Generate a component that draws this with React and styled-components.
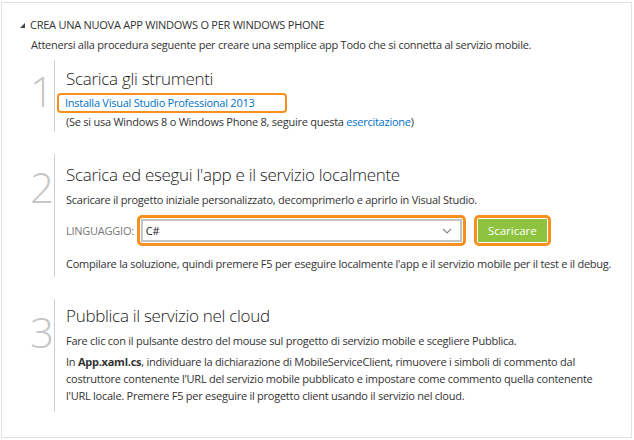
import React from 'react';
import styled, { createGlobalStyle } from 'styled-components';

const GlobalStyle = createGlobalStyle`
  body {
    margin: 0;
    background: #fff;
    font-family: "Open Sans", "Noto Sans", sans-serif;
    color: #333;
  }
`;

const Panel = styled.div`
  box-sizing: border-box;
  margin: 2px 0 0 1px;
  width: 631px;
  height: 436px;
  border: 1px solid #e3e3e3;
  padding: 12px 0 0 18px;
  font-size: 11px;
  letter-spacing: -0.25px;
`;

const Header = styled.div`
  display: flex;
  align-items: center;
  gap: 5px;
  height: 18px;
  text-transform: uppercase;
  color: #333;
`;

const Caret = styled.span`
  width: 0;
  height: 0;
  border-left: 5px solid transparent;
  border-bottom: 5px solid #444;
  margin-top: 2px;
`;

const Intro = styled.p`
  margin: 3px 0 0 11px;
  line-height: 18px;
`;

const Steps = styled.div`
  display: flex;
  flex-direction: column;
  gap: 22px;
  margin: 6px 0 0 11px;
`;

const Step = styled.section`
  display: grid;
  grid-template-columns: 24px 1fr;
  height: ${p => p.h}px;
`;

const Num = styled.div`
  border-right: 1px solid #cfcfcf;
  font-size: 42px;
  font-weight: 300;
  color: #c6c6c6;
  line-height: 1;
  padding-top: ${p => p.top}px;
  margin-left: -1px;
`;

const Body = styled.div`
  padding: ${p => p.top || 7}px 0 0 11px;
`;

const Title = styled.h2`
  margin: 0 0 ${p => p.mb || 2}px;
  font-size: 17px;
  font-weight: 300;
  letter-spacing: -0.3px;
  line-height: 24px;
  color: #222;
`;

const Text = styled.p`
  margin: ${p => p.mt || 0}px 0 0;
  line-height: 17px;
  max-width: ${p => p.maxW ? `${p.maxW}px` : 'none'};
`;

const Link = styled.a`
  color: #0072c6;
  text-decoration: none;
`;

const Highlight = styled.div`
  display: inline-block;
  box-sizing: border-box;
  border: 2.5px solid #f7901e;
  border-radius: 4px;
  margin-left: -9px;
  padding: 0 30px 0 6px;
  height: 20px;
  line-height: 15px;
`;

const Row = styled.div`
  display: flex;
  align-items: center;
  margin-top: 7px;
`;

const Label = styled.span`
  color: #777;
  text-transform: uppercase;
  margin-right: 3px;
`;

const OrangeRing = styled.div`
  box-sizing: border-box;
  border: 3px solid #f7901e;
  border-radius: 5px;
  padding: 1px;
  width: ${p => p.w}px;
  height: 31px;
  margin-right: ${p => p.mr || 0}px;
`;

const Select = styled.div`
  box-sizing: border-box;
  height: 100%;
  border: 2px solid #c4c4c4;
  display: flex;
  align-items: center;
  justify-content: space-between;
  padding: 0 8px 0 3px;
  color: #222;
`;

const GreenButton = styled.button`
  box-sizing: border-box;
  width: 100%;
  height: 100%;
  border: none;
  background: #8dc33f;
  color: #fff;
  font: inherit;
  font-size: 11.5px;
  padding: 0;
`;

const Bold = styled.b`
  font-weight: 700;
`;

export default function App() {
  return (
    <>
      <GlobalStyle />
      <Panel>
        <Header>
          <Caret />
          <span>Crea una nuova app Windows o per Windows Phone</span>
        </Header>
        <Intro>Attenersi alla procedura seguente per creare una semplice app Todo che si connetta al servizio mobile.</Intro>
        <Steps>
          <Step h={72}>
            <Num top={10}>1</Num>
            <Body>
              <Title>Scarica gli strumenti</Title>
              <Highlight>
                <Link href="#">Installa Visual Studio Professional 2013</Link>
              </Highlight>
              <Text>
                (Se si usa Windows 8 o Windows Phone 8, seguire questa <Link href="#">esercitazione</Link>)
              </Text>
            </Body>
          </Step>
          <Step h={123}>
            <Num top={12}>2</Num>
            <Body top={9}>
              <Title mb={4}>Scarica ed esegui l'app e il servizio localmente</Title>
              <Text>Scaricare il progetto iniziale personalizzato, decomprimerlo e aprirlo in Visual Studio.</Text>
              <Row>
                <Label>Linguaggio:</Label>
                <OrangeRing w={329} mr={8}>
                  <Select>
                    <span>C#</span>
                    <svg width="10" height="6" viewBox="0 0 10 6">
                      <path d="M1 1l4 4 4-4" fill="none" stroke="#888" strokeWidth="1.1" />
                    </svg>
                  </Select>
                </OrangeRing>
                <OrangeRing w={77}>
                  <GreenButton>Scaricare</GreenButton>
                </OrangeRing>
              </Row>
              <Text mt={9}>Compilare la soluzione, quindi premere F5 per eseguire localmente l'app e il servizio mobile per il test e il debug.</Text>
            </Body>
          </Step>
          <Step h={113}>
            <Num top={12}>3</Num>
            <Body top={5}>
              <Title mb={4}>Pubblica il servizio nel cloud</Title>
              <Text>Fare clic con il pulsante destro del mouse sul progetto di servizio mobile e scegliere Pubblica.</Text>
              <Text mt={4} maxW={530}>
                In <Bold>App.xaml.cs</Bold>, individuare la dichiarazione di MobileServiceClient, rimuovere i simboli di commento dal costruttore contenente l'URL del servizio mobile pubblicato e impostare come commento quella contenente l'URL locale. Premere F5 per eseguire il progetto client usando il servizio nel cloud.
              </Text>
            </Body>
          </Step>
        </Steps>
      </Panel>
    </>
  );
}
